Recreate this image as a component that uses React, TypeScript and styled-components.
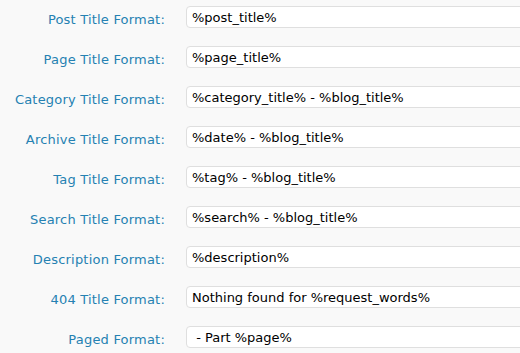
import React from 'react'
import styled, { createGlobalStyle } from 'styled-components'

const GlobalStyle = createGlobalStyle`
  html, body {
    margin: 0;
    padding: 0;
    background: #f9f9f9;
    overflow: hidden;
  }
`

const Form = styled.div`
  display: grid;
  grid-template-columns: 165px 360px;
  grid-auto-rows: 40px;
  column-gap: 21px;
  padding-top: 6px;
  font-family: 'DejaVu Sans', Verdana, sans-serif;
  font-size: 13px;
`

const Label = styled.label`
  text-align: right;
  color: #2581b2;
  line-height: 16px;
  padding-top: 6px;
  letter-spacing: 0.2px;
  white-space: nowrap;
`

const Field = styled.input`
  box-sizing: border-box;
  width: 100%;
  height: 22px;
  margin: 0;
  padding: 0 5px;
  border: 1px solid #dfdfdf;
  border-radius: 4px;
  background: #fff;
  color: #000;
  font-family: inherit;
  font-size: 13px;
  outline: none;
`

const rows: [string, string][] = [
  ['Post Title Format:', '%post_title%'],
  ['Page Title Format:', '%page_title%'],
  ['Category Title Format:', '%category_title% - %blog_title%'],
  ['Archive Title Format:', '%date% - %blog_title%'],
  ['Tag Title Format:', '%tag% - %blog_title%'],
  ['Search Title Format:', '%search% - %blog_title%'],
  ['Description Format:', '%description%'],
  ['404 Title Format:', 'Nothing found for %request_words%'],
  ['Paged Format:', ' - Part %page%'],
]

const App: React.FC = () => (
  <>
    <GlobalStyle />
    <Form>
      {rows.map(([label, value]) => (
        <React.Fragment key={label}>
          <Label>{label}</Label>
          <div>
            <Field type="text" defaultValue={value} />
          </div>
        </React.Fragment>
      ))}
    </Form>
  </>
)

export default App
